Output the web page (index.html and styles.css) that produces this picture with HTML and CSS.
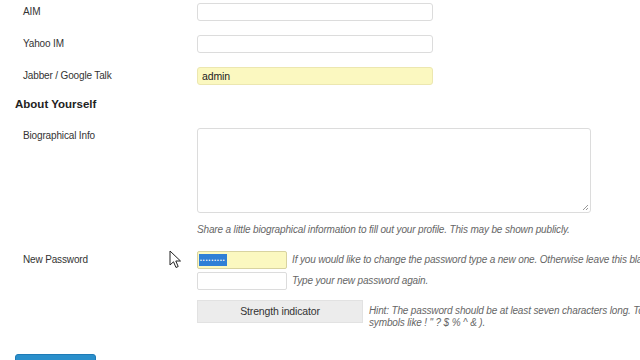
FILE: index.html
```html
<!DOCTYPE html>
<html>
<head>
<meta charset="utf-8">
<link rel="stylesheet" href="styles.css">
</head>
<body>
<div class="page">
  <div class="row">
    <div class="label">AIM</div>
    <div class="field"><input class="text" type="text" value=""></div>
  </div>
  <div class="row">
    <div class="label">Yahoo IM</div>
    <div class="field"><input class="text" type="text" value=""></div>
  </div>
  <div class="row">
    <div class="label">Jabber / Google Talk</div>
    <div class="field"><div class="text filled">admin</div></div>
  </div>
  <h3 class="heading">About Yourself</h3>
  <div class="row bio">
    <div class="label">Biographical Info</div>
    <div class="field">
      <div class="textarea"><svg class="grip" width="8" height="8" viewBox="0 0 8 8"><path d="M7 2L2 7M7 5L5 7" stroke="#999" stroke-width="1"/></svg></div>
      <p class="desc">Share a little biographical information to fill out your profile. This may be shown publicly.</p>
    </div>
  </div>
  <div class="row pass">
    <div class="label">New Password</div>
    <div class="field">
      <div class="pline">
        <div class="pw filled"><span class="sel">&bull;&bull;&bull;&bull;&bull;&bull;&bull;&bull;&bull;</span></div>
        <span class="desc inline">If you would like to change the password type a new one. Otherwise leave this blank.</span>
      </div>
      <div class="pline">
        <div class="pw"></div>
        <span class="desc inline">Type your new password again.</span>
      </div>
      <div class="strength-line">
        <div class="strength">Strength indicator</div>
        <p class="desc hint">Hint: The password should be at least seven characters long. To make it stronger, use upper and lower case letters, numbers and symbols like ! " ? $ % ^ &amp; ).</p>
      </div>
    </div>
  </div>
  <div class="submit"><span class="button">Update Profile</span></div>
  <svg class="cursor" width="14" height="20" viewBox="0 0 14 20"><path d="M1 1L1 15L4.5 11.8L7 17.5L9.2 16.5L6.8 11L11.5 11Z" fill="#fff" stroke="#222" stroke-width="1" stroke-linejoin="round"/></svg>
</div>
</body>
</html>
```
FILE: styles.css
```css
html, body {
  margin: 0;
  padding: 0;
  background: #fff;
  overflow: hidden;
  width: 640px;
  height: 360px;
}
.page {
  position: relative;
  padding: 3px 0 0 15px;
  font-family: "Liberation Sans", Arial, sans-serif;
  font-size: 10px;
  letter-spacing: -0.15px;
  color: #333;
  width: 900px;
}
.row {
  display: grid;
  grid-template-columns: 182px 1fr;
  height: 32px;
}
.label {
  padding: 3px 0 0 8px;
  line-height: 12px;
}
.text {
  box-sizing: border-box;
  display: block;
  width: 236px;
  height: 18px;
  border: 1px solid #dcdcdc;
  border-radius: 3px;
  background: #fff;
  margin: 0;
  padding: 0 4px;
  font: inherit;
  font-size: 10.5px;
  line-height: 16px;
  outline: none;
}
.filled {
  background: #fbf8c0;
  border-color: #ece7b0;
  color: #222;
}
.heading {
  margin: 0;
  height: 29px;
  font-size: 11.5px;
  letter-spacing: 0;
  font-weight: bold;
  line-height: 12px;
  margin-top: -1px;
  margin-bottom: 1px;
  color: #222;
}
.row.bio {
  height: auto;
}
.row.bio .label {
  padding-top: 2px;
}
.textarea {
  position: relative;
  box-sizing: border-box;
  width: 394px;
  height: 85px;
  border: 1px solid #dcdcdc;
  border-radius: 3px;
}
.grip {
  position: absolute;
  right: 1px;
  bottom: 1px;
}
.desc {
  margin: 0;
  font-style: italic;
  color: #666;
  line-height: 12px;
  white-space: nowrap;
}
.bio .desc {
  padding-top: 11px;
  height: 38px;
  box-sizing: border-box;
}
.row.pass {
  height: auto;
}
.row.pass .label {
  padding-top: 3px;
}
.pline {
  display: flex;
  align-items: center;
  gap: 5px;
  height: 18px;
  margin-bottom: 3px;
}
.pw {
  box-sizing: border-box;
  width: 90px;
  height: 18px;
  border: 1px solid #dcdcdc;
  border-radius: 2px;
  background: #fff;
  padding: 2px 1px;
  flex: none;
}
.pw.filled {
  background: #fbf8c0;
  border-color: #d8d3a0;
}
.sel {
  display: block;
  width: 28px;
  height: 12px;
  background: #2f7fd6;
  color: #fff;
  font-size: 5px;
  line-height: 12px;
  letter-spacing: 1.1px;
  padding-left: 1px;
  box-sizing: border-box;
  overflow: hidden;
  white-space: nowrap;
}
.strength-line {
  display: flex;
  gap: 6px;
  margin-top: 10px;
}
.strength {
  box-sizing: border-box;
  width: 166px;
  height: 23px;
  background: #ececec;
  border: 1px solid #e2e2e2;
  text-align: center;
  line-height: 21px;
  color: #333;
  font-size: 10.5px;
  flex: none;
}
.hint {
  white-space: normal;
  width: 560px;
  padding-top: 5px;
}
.submit {
  margin-top: 25px;
}
.button {
  display: inline-block;
  width: 79px;
  height: 20px;
  background: #2a8fcb;
  border: 1px solid #1e7bb6;
  border-radius: 3px;
  color: #fff;
  text-align: center;
  line-height: 20px;
}
.cursor {
  position: absolute;
  left: 169px;
  top: 250px;
}
```
